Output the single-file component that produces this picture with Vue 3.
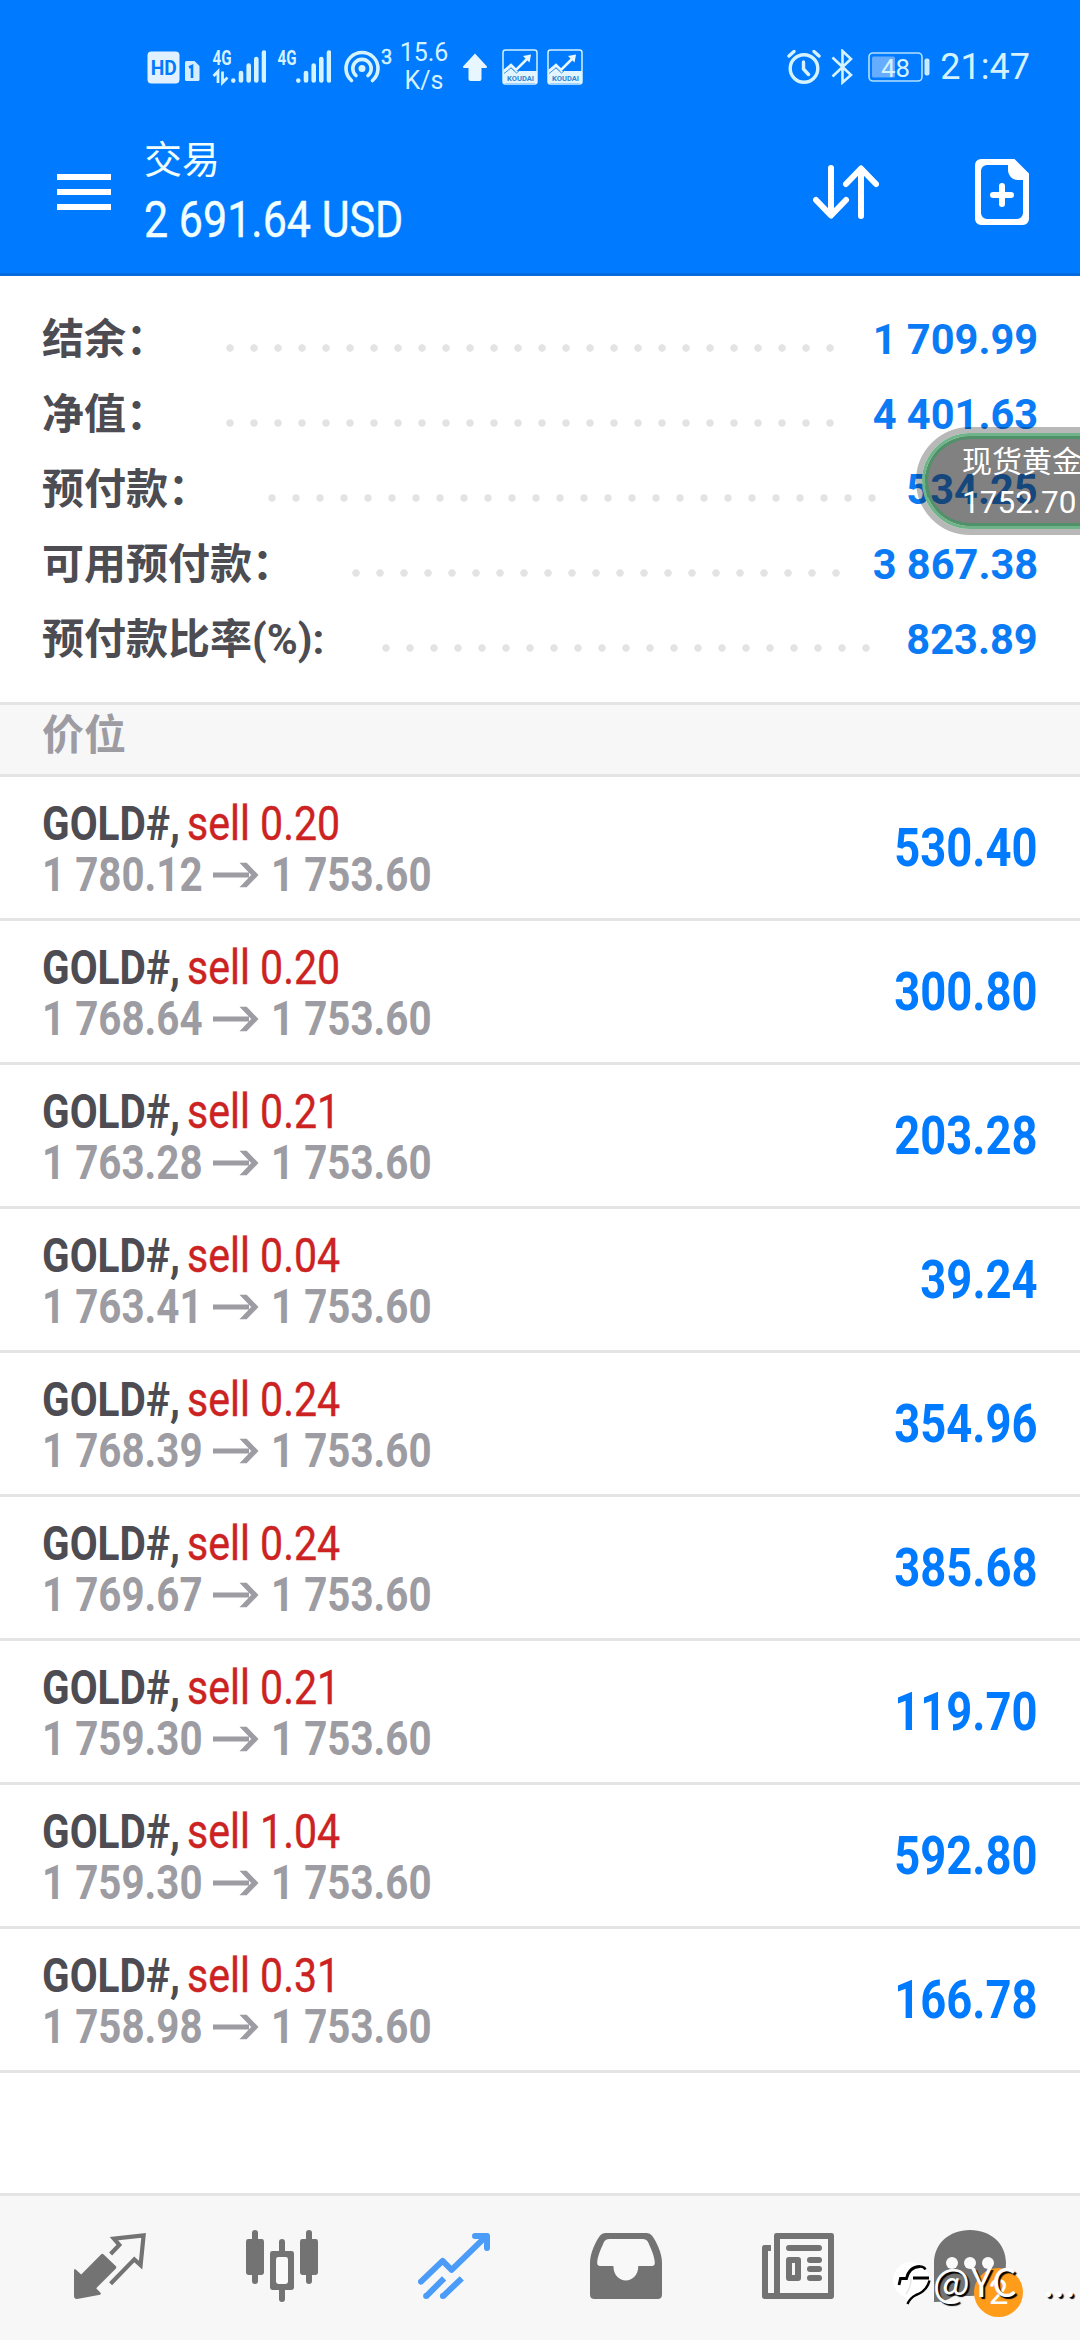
<script setup>
const summary = [
  { label: '结余：', value: '1 709.99', dots: 26 },
  { label: '净值：', value: '4 401.63', dots: 26 },
  { label: '预付款：', value: '534.25', dots: 26 },
  { label: '可用预付款：', value: '3 867.38', dots: 21 },
  { label: '预付款比率(%):', value: '823.89', dots: 21 },
]

const positions = [
  { volume: '0.20', open: '1 780.12', profit: '530.40' },
  { volume: '0.20', open: '1 768.64', profit: '300.80' },
  { volume: '0.21', open: '1 763.28', profit: '203.28' },
  { volume: '0.04', open: '1 763.41', profit: '39.24' },
  { volume: '0.24', open: '1 768.39', profit: '354.96' },
  { volume: '0.24', open: '1 769.67', profit: '385.68' },
  { volume: '0.21', open: '1 759.30', profit: '119.70' },
  { volume: '1.04', open: '1 759.30', profit: '592.80' },
  { volume: '0.31', open: '1 758.98', profit: '166.78' },
]
</script>

<template>
  <div class="screen">
    <header class="top">
      <div class="status">
        <svg class="hd" width="53" height="44" viewBox="147 44 53 44">
          <rect x="147.5" y="50.5" width="32" height="32" rx="4" fill="#e2f1ff" />
          <text x="163.7" y="73.5" text-anchor="middle" font-size="21" font-weight="700" fill="#007aff" textLength="26" lengthAdjust="spacingAndGlyphs">HD</text>
          <path d="M186.500 60h8l5 5v13.500a1.500 1.500 0 0 1-1.500 1.500h-11.500a1.500 1.500 0 0 1-1.500-1.500v-17a1.500 1.500 0 0 1 1.500-1.500z" fill="#d5eeff" />
          <path d="M189 66.500l3-1.500v12" fill="none" stroke="#007aff" stroke-width="2.600" />
        </svg>
        <svg v-for="n in 2" :key="n" class="signal" width="54" height="44" viewBox="212 44 54 44">
          <text x="212.500" y="64" font-size="19.500" font-weight="700" fill="#d5f2ff" textLength="19" lengthAdjust="spacingAndGlyphs">4G</text>
          <path v-if="n === 1" d="M213.500 75l4.500-4.500v11.500M222.500 70.500v11l5-5" fill="none" stroke="#d5f2ff" stroke-width="2.800" />
          <path d="M233.300 79.500v.1M241 72v7.500M248.700 64.500v15M256.300 58v21.500M264 51.500v28" stroke="#d5f2ff" stroke-width="4.600" stroke-linecap="round" />
        </svg>
        <svg class="hotspot" width="50" height="44" viewBox="343 44 50 44" fill="none" stroke="#d5f2ff" stroke-width="3.600" stroke-linecap="round">
          <circle cx="362" cy="67.500" r="3.500" fill="#d5f2ff" stroke="none" />
          <path d="M351.500 79.500a16 16 0 1 1 21 0M356 74.500a9.200 9.200 0 1 1 12 0" />
          <text x="381" y="63" font-size="20" fill="#d5f2ff" stroke="#d5f2ff" stroke-width=".5">3</text>
        </svg>
        <div class="speed"><span>15.6</span><span>K/s</span></div>
        <svg class="up" width="26" height="30" viewBox="0 0 26 30">
          <path d="M13 1.500L25 14.500Q25 16 24 16H19.500V27Q19.500 29 17.500 29H8.500Q6.500 29 6.500 27V16H2Q1 16 1 14.500z" fill="#e8f7ff" />
        </svg>
        <svg v-for="n in 2" :key="'k' + n" class="koudai" width="36" height="36" viewBox="0 0 36 36">
          <rect x="1" y="1" width="34" height="34" rx="2.500" fill="none" stroke="#d5f2ff" stroke-width="1.500" />
          <path d="M1 22L9 18l4 4h22v12H1z" fill="#e2f5ff" />
          <path d="M2 22l7-6 5 5L26 9" fill="none" stroke="#e8f7ff" stroke-width="2.600" />
          <path d="M2 24.500l7-5.500 5.500 5 3-2.500" fill="none" stroke="#3c96dc" stroke-width="1" />
          <path d="M29 5.500l-1.500 8-6.500-6.500z" fill="#e8f7ff" />
          <text x="5" y="31.500" font-size="8" font-weight="700" fill="#2f86d0" textLength="27" lengthAdjust="spacingAndGlyphs">KOUDAI</text>
        </svg>
        <div class="spacer"></div>
        <svg width="34" height="36" viewBox="0 0 34 36" fill="none" stroke="#d5f2ff" stroke-width="3.400" stroke-linecap="round">
          <circle cx="17" cy="19.500" r="13.800" />
          <path d="M16.500 13v7l5 5.500M2 7l5-4.500M32 7l-5-4.500" />
        </svg>
        <svg class="bt" width="22" height="36" viewBox="0 0 22 36">
          <path d="M1.500 8.500L20 26l-8.500 7.500V2L20 10 1.500 27.500" fill="none" stroke="#d5f2ff" stroke-width="2.600" />
        </svg>
        <svg class="battery" width="62" height="30" viewBox="0 0 62 30">
          <rect x="1" y="1" width="53" height="28" rx="4" fill="none" stroke="#b5e0ff" stroke-width="1.600" />
          <rect x="4" y="4.500" width="23" height="21" rx="1.500" fill="#66adff" />
          <rect x="56.500" y="6.500" width="5" height="17" rx="2" fill="#c8ecff" />
          <text x="27.500" y="24.500" text-anchor="middle" font-size="26.500" fill="#d5f2ff" textLength="29" lengthAdjust="spacingAndGlyphs">48</text>
        </svg>
        <span class="time">21:47</span>
      </div>
      <div class="appbar">
        <svg class="menu" width="54" height="36" viewBox="0 0 54 36"><path d="M0 3h54M0 18h54M0 33h54" stroke="#fff" stroke-width="6" /></svg>
        <div class="titles">
          <div class="title">交易</div>
          <div class="amount"><span class="narrow">2 691.64 USD</span></div>
        </div>
        <svg width="66" height="54" viewBox="0 0 66 54" fill="none" stroke="#fff" stroke-width="6" stroke-linecap="round" stroke-linejoin="round">
          <path d="M18 3v46M3 35l15 15.500L33 35M48 51V5M33 19L48 3.500 63 19" />
        </svg>
        <svg class="add" width="54" height="66" viewBox="0 0 54 66">
          <path fill-rule="evenodd" fill="#fff" d="M6 0H39.500L54 14.500V60a6 6 0 0 1-6 6H6a6 6 0 0 1-6-6V6a6 6 0 0 1 6-6zM12 6a6 6 0 0 0-6 6v42a6 6 0 0 0 6 6h30a6 6 0 0 0 6-6V21h-5c-6 0-10-5-10-10V6z" />
          <path d="M27 27v18M18 36h18" stroke="#fff" stroke-width="6" stroke-linecap="round" />
        </svg>
      </div>
    </header>

    <section class="summary">
      <div v-for="s in summary" :key="s.label" class="line">
        <span class="label">{{ s.label }}</span>
        <span class="dots" :style="{ width: s.dots * 24 + 'px' }"></span>
        <span class="value">{{ s.value }}</span>
      </div>
    </section>

    <div class="section">价位</div>

    <main class="rows">
      <div v-for="(p, i) in positions" :key="i" class="row">
        <div class="info">
          <div class="deal"><span class="symbol">GOLD#,</span><span class="side">sell {{ p.volume }}</span></div>
          <div class="prices">
            <span class="price">{{ p.open }}</span>
            <svg width="46" height="26" viewBox="0 0 46 26"><path d="M0 10.500h36v5H0zM26.500.8h7.200L45.500 13 33.700 25.200h-7.200L38.200 13z" fill="#9c9ca2" /></svg>
            <span class="price">1 753.60</span>
          </div>
        </div>
        <span class="profit">{{ p.profit }}</span>
      </div>
    </main>

    <nav class="tabs">
      <svg viewBox="0 0 24 24">
        <path d="M0 13.200Q.3 12.900.6 13.200L2.400 14.800 9 8.200Q9.400 7.700 9.900 8.200L13.900 12Q14.300 12.400 13.900 12.900L7.400 19.400 9 21.100 8.700 21.600 1 23Q0 23 0 22z" fill="#737373" />
        <path d="M12.200 8L15.100 5 13.300 2.900 23.200 1.800 22.200 11.700 20.100 9.800 12.200 17.900" fill="none" stroke="#737373" stroke-width="1.400" />
      </svg>
      <svg viewBox="0 0 24 24" fill="#737373">
        <rect y="3" width="6" height="12" rx=".8" /><rect x="18" y="3" width="6" height="12" rx=".8" />
        <path d="M3 1v16M21 1v16M12 4v19" stroke="#737373" stroke-width="2" stroke-linecap="round" />
        <rect x="8" y="7" width="8" height="13" rx=".8" /><rect x="10" y="9" width="4" height="9" rx=".8" fill="#fafafa" />
      </svg>
      <svg viewBox="0 0 24 24" fill="none" stroke="#4a9cf8" stroke-width="2">
        <path d="M1 17.200L8.200 10.300 11.200 13.300 22.500 2.300M19 2h4v4" stroke-linecap="round" stroke-linejoin="round" />
        <path d="M2.700 22.100L8.700 16.100M8.300 22.100L14.600 16.100" />
        <g fill="#4a9cf8" stroke="none"><circle cx="2.700" cy="22" r="1" /><circle cx="8.300" cy="22" r="1" /></g>
      </svg>
      <svg viewBox="0 0 24 24">
        <path d="M1.500 23Q0 23 0 21.500V11C0 7.500 2 3.700 3.300 1.900Q4 1 5 1H19Q20 1 20.700 1.900C22 3.700 24 7.500 24 11V21.500Q24 23 22.500 23z" fill="#737373" />
        <path d="M6.500 3h11q1.500 0 2 1.300C20.400 6.500 21.500 8.500 21.600 11q0 1-1 1H16.100c0 6.400-8.300 6.400-8.300 0H3.400q-1 0-1-1C2.500 8.500 3.600 6.500 4.500 4.300Q5 3 6.500 3z" fill="#f8f8f8" />
      </svg>
      <svg viewBox="0 0 24 24" fill="#737373">
        <path fill-rule="evenodd" d="M4.800 1H23.200Q24 1 24 1.800V22.200Q24 23 23.200 23H.8Q0 23 0 22.200V5.800Q0 5 .8 5H3V7H2V21H4V1.800Q4 1 4.800 1zM6 3v18h16V3z" />
        <rect x="8" y="5" width="12" height="2" rx="1" /><rect x="15" y="9" width="5" height="2" rx="1" /><rect x="15" y="12" width="5" height="2" rx="1" /><rect x="15" y="15" width="5" height="2" rx="1" />
        <path fill-rule="evenodd" d="M9 9h3q1 0 1 1v6q0 1-1 1H9q-1 0-1-1v-6q0-1 1-1zM10 11v4h1v-4z" />
      </svg>
      <div class="chat">
        <svg viewBox="0 0 24 24">
          <path d="M12 0C19 0 24 4.600 24 11S19 22 12 22H6.500Q4 24 0 24V11C0 4.600 5 0 12 0z" fill="#737373" />
          <g fill="#fafafa"><circle cx="6" cy="11" r="2" /><circle cx="12" cy="11" r="2" /><circle cx="18" cy="11" r="2" /></g>
        </svg>
        <span class="badge">2</span>
      </div>
    </nav>

    <div class="float">
      <div class="float-body"><span>现货黄金</span><span class="quote">1752.70</span></div>
    </div>

    <div class="watermark">
      <svg width="40" height="46" viewBox="0 0 40 46">
        <circle cx="18" cy="18" r="18" fill="#fff" /><path d="M13 33L14 42 26 33z" fill="#fff" />
        <path d="M6 23L7.500 16.500H13.500Q16 5 27 4.500M20 16H36" fill="none" stroke="#000" stroke-width="2.800" />
        <path d="M27 4.500q4 0 5.500 3M36.500 18.500Q34 29 23 33 17 36 14.500 42" fill="none" stroke="#000" stroke-width="2.400" />
        <path d="M18 17q0 8-5 15" fill="none" stroke="#e6e6e6" stroke-width="1.500" />
      </svg>
      <span class="handle">@YC</span><span class="more">...</span>
    </div>
  </div>
</template>

<style>
body { margin: 0; background: #fff; }
</style>

<style scoped>
.screen { position: relative; width: 1080px; height: 2340px; overflow: hidden; display: flex; flex-direction: column; background: #fff; font-family: Roboto, "Noto Sans CJK SC", sans-serif; }
svg { display: block; flex: none; }
.top { box-sizing: border-box; flex: none; height: 276px; background: #007aff; border-bottom: 3px solid #056bdc; color: #f2ffff; }
.status { display: flex; align-items: center; height: 133px; padding: 0 50px 0 147px; color: #d5f2ff; box-sizing: border-box; }
.signal { margin-left: 12px; }
.signal + .signal { margin-left: 11px; }
.hotspot { margin-left: 12px; }
.speed { width: 50px; margin-left: 6px; display: flex; flex-direction: column; align-items: center; font-size: 25px; line-height: 28px; }
.up { margin-left: 13px; }
.koudai { margin-left: 14px; }
.koudai + .koudai { margin-left: 9px; }
.spacer { flex: 1; }
.bt { margin-left: 10px; }
.battery { margin-left: 15px; }
.time { margin-left: 10px; font-size: 36px; line-height: 40px; }
.appbar { display: flex; align-items: center; height: 118px; padding: 0 51px 0 57px; }
.titles { flex: 1; margin-left: 33px; display: flex; flex-direction: column; }
.title { font-family: "Noto Sans CJK SC", sans-serif; font-size: 38px; line-height: 46px; padding-bottom: 10px; }
.amount { font-size: 50px; line-height: 61px; }
.narrow { display: inline-block; transform: scaleX(.86); transform-origin: 0 50%; white-space: pre; -webkit-text-stroke: .4px currentColor; }
.add { margin-left: 96px; }
.summary { flex: none; height: 426px; box-sizing: border-box; padding: 26px 42px 0; }
.line { display: flex; align-items: center; height: 75px; }
.label { font-size: 42px; line-height: 60px; font-weight: 700; color: #4c4c52; white-space: nowrap; }
.dots { height: 8px; margin: 16px 0 0 50px; background: radial-gradient(circle, #e3e3e4 3.3px, transparent 4.2px) 0 0 / 24px 8px; }
.value { margin-left: auto; font-size: 42px; font-weight: 700; color: #0a7bf5; white-space: nowrap; transform: scaleX(.99); transform-origin: 100% 50%; }
.section { flex: none; box-sizing: border-box; height: 75px; border: solid #e4e4e5; border-width: 3px 0; background: #f7f7f7; padding-left: 42px; font-size: 42px; line-height: 61px; font-weight: 700; color: #9c9ca2; }
.rows { flex: 1; }
.row { box-sizing: border-box; height: 144px; border-bottom: 3px solid #e4e4e5; display: flex; align-items: center; justify-content: space-between; padding: 0 42px; }
.info { padding-top: 3px; font-size: 48px; line-height: 51px; }
.deal, .prices { display: flex; align-items: center; height: 51px; }
.symbol { width: 144.500px; font-weight: 700; color: #4c4c52; transform: scaleX(.845); transform-origin: 0 50%; white-space: nowrap; }
.side { color: #cc2222; transform: scaleX(.855); transform-origin: 0 50%; -webkit-text-stroke: .4px currentColor; }
.price { width: 171px; font-weight: 700; color: #9c9ca2; transform: scaleX(.84); transform-origin: 0 50%; white-space: nowrap; }
.price + svg { margin-right: 12px; }
.profit { font-size: 54px; font-weight: 700; color: #007aff; transform: scaleX(.84); transform-origin: 100% 50%; }
.tabs { flex: none; box-sizing: border-box; height: 147px; border-top: 3px solid #e4e4e5; background: #f7f7f7; padding: 34px 74px 0; display: flex; justify-content: space-between; }
.tabs svg { width: 72px; height: 72px; }
.chat { position: relative; width: 72px; height: 72px; }
.badge { position: absolute; left: 40px; top: 38px; width: 49px; height: 49px; border-radius: 50%; background: #ff9d1b; color: #fff; font-size: 35px; line-height: 49px; text-align: center; }
.float { position: absolute; left: 916px; top: 427px; width: 240px; height: 108px; box-sizing: border-box; border: 6px solid rgba(0, 0, 0, .28); border-radius: 54px; }
.float-body { box-sizing: border-box; height: 96px; border: 3px solid #6eb488; border-radius: 48px; box-shadow: inset 0 0 0 3px #51916a; background: rgba(30, 30, 30, .56); background-clip: padding-box; color: #fff; display: flex; flex-direction: column; padding: 5px 0 0 37px; font-size: 30px; line-height: 42px; }
.quote { font-size: 31.500px; line-height: 40px; }
.watermark { position: absolute; left: 893px; top: 2262px; display: flex; align-items: flex-start; color: #fff; font-family: "Noto Sans CJK SC", sans-serif; font-size: 39px; line-height: 36px; text-shadow: 2px 2px 1px #000; }
.handle { width: 86px; letter-spacing: 1px; }
.more { margin-left: 24px; }
</style>
